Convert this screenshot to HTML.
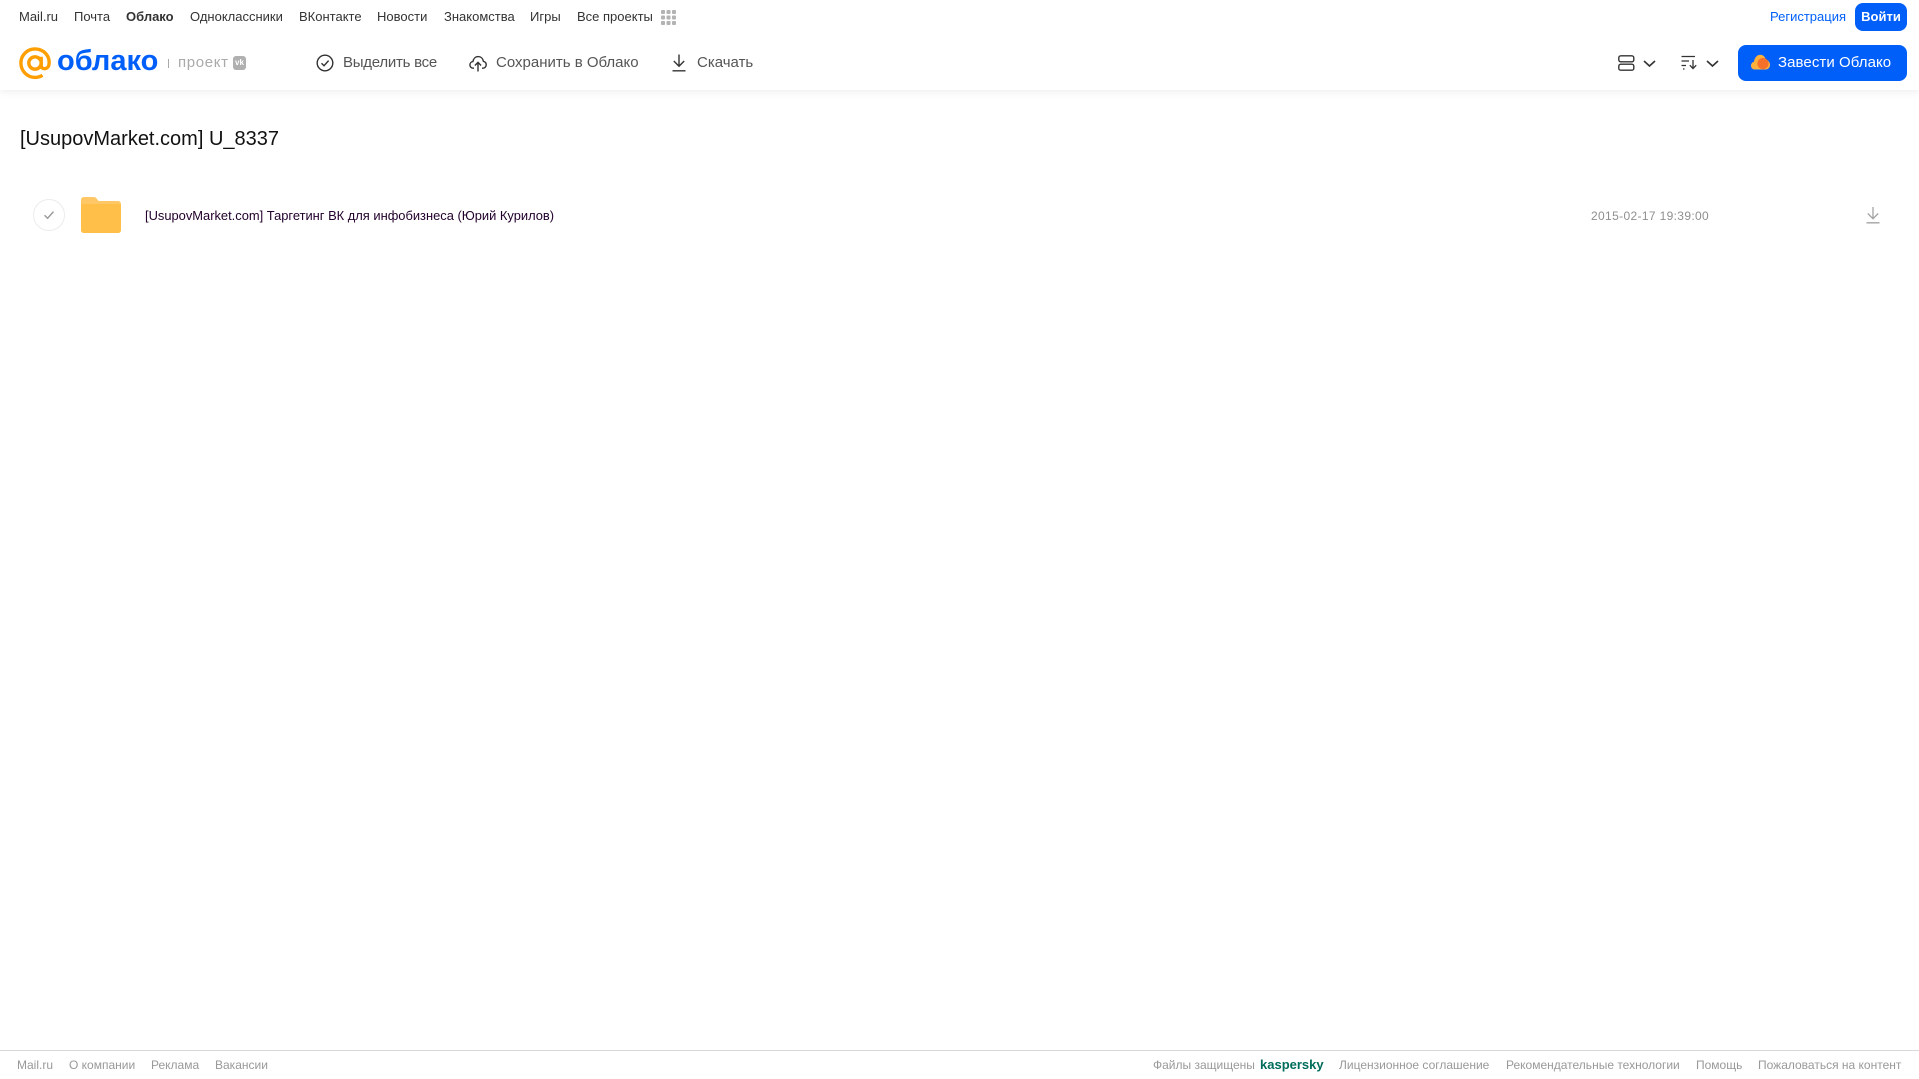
<!DOCTYPE html>
<html lang="ru"><head><meta charset="utf-8"><title>Облако</title>
<style>
html,body{margin:0;padding:0;background:#fff;width:1919px;height:1079px;overflow:hidden}
body{font-family:"Liberation Sans",Arial,sans-serif;position:relative}
.t{position:absolute;white-space:nowrap;line-height:20px}
.n{top:7px;font-size:13px;color:#333}
.b{top:53px;font-size:15px;color:#555}
.f{top:1055px;font-size:12px;color:#999}
svg{position:absolute;overflow:visible}
</style></head><body>
<div style="position:absolute;left:0;top:0;width:1919px;height:90px;background:#fff;box-shadow:0 2px 8px rgba(0,0,0,.07)"></div>

<span class="t n" style="left:19px">Mail.ru</span>
<span class="t n" style="left:74px">Почта</span>
<span class="t n" style="left:126px;font-weight:bold">Облако</span>
<span class="t n" style="left:190px">Одноклассники</span>
<span class="t n" style="left:299px">ВКонтакте</span>
<span class="t n" style="left:377px">Новости</span>
<span class="t n" style="left:444px">Знакомства</span>
<span class="t n" style="left:530px">Игры</span>
<span class="t n" style="left:577px">Все проекты</span>
<svg style="left:661px;top:10px" width="15" height="15" fill="#b3b3b3">
<rect width="4" height="4" rx="1"/><rect x="5.500" width="4" height="4" rx="1"/><rect x="11" width="4" height="4" rx="1"/>
<rect y="5.500" width="4" height="4" rx="1"/><rect x="5.500" y="5.500" width="4" height="4" rx="1"/><rect x="11" y="5.500" width="4" height="4" rx="1"/>
<rect y="11" width="4" height="4" rx="1"/><rect x="5.500" y="11" width="4" height="4" rx="1"/><rect x="11" y="11" width="4" height="4" rx="1"/>
</svg>

<span class="t n" style="left:1770px;color:#005ff9">Регистрация</span>
<div style="position:absolute;left:1855px;top:3px;width:52px;height:28px;border-radius:8px;background:#005ff9;color:#fff;font-size:13px;font-weight:bold;line-height:28px;text-align:center">Войти</div>

<svg style="left:19px;top:47px" width="33" height="33" viewBox="0 0 33 33" fill="none" stroke="#ff9e00" stroke-width="3.400">
<circle cx="16" cy="16" r="6.200"/>
<path d="M22.200 9.800V18.500C22.200 22.800 28.800 22.800 29.900 18C31.500 9.500 25 1.900 16 1.900C8.200 1.900 1.900 8.200 1.900 16C1.900 24 8.200 30.400 16 30.400C18.800 30.400 21.200 29.700 23.500 28.300"/>
</svg>
<span class="t" style="left:57px;top:45px;font-size:29px;line-height:32px;font-weight:bold;color:#005ff9">облако</span>
<div style="position:absolute;left:168px;top:59px;width:1px;height:9px;background:#aaa"></div>
<span class="t" style="left:178px;top:53px;font-size:15px;color:#aaa;letter-spacing:.65px">проект</span>
<div style="position:absolute;left:233px;top:56px;width:13px;height:14px;border-radius:3px;background:#b0b0b0;color:#fff;font-size:8px;font-weight:bold;line-height:14px;text-align:center">vk</div>

<svg style="left:316px;top:54px" width="18" height="18" viewBox="0 0 18 18" fill="none" stroke="#333" stroke-width="1.400">
<circle cx="9" cy="9" r="7.800"/><path d="M5.500 9.200L8 11.700L12.600 6.600"/>
</svg>
<span class="t b" style="left:343px;letter-spacing:-.25px">Выделить все</span>

<svg style="left:469px;top:54px" width="18" height="18" viewBox="0 0 18 18" fill="none" stroke="#333" stroke-width="1.400">
<path d="M5 14.200H4.300C2.300 14.200 .9 12.700 .9 10.900C.9 9.200 2.200 7.800 3.900 7.600C4.400 4.600 6.500 2.600 9.200 2.600C11.900 2.600 13.900 4.600 14.400 7.300C16 7.700 17.200 9 17.200 10.800C17.200 12.700 15.700 14.200 13.700 14.200H13"/>
<path d="M9 17.500V8.500M5.900 11.500L9 8.400L12.100 11.500"/>
</svg>
<span class="t b" style="left:496px">Сохранить в Облако</span>

<svg style="left:672px;top:54px" width="14" height="18" viewBox="0 0 14 18" fill="none" stroke="#333" stroke-width="1.400">
<path d="M7 .5V12M1.800 7L7 12.200L12.200 7M.5 16.800H13.500"/>
</svg>
<span class="t b" style="left:697px">Скачать</span>

<svg style="left:1618px;top:55px" width="17" height="16" viewBox="0 0 17 16" fill="none" stroke="#333" stroke-width="1.400">
<rect x=".8" y=".8" width="15" height="6" rx="2"/><rect x=".8" y="9.200" width="15" height="6" rx="2"/>
</svg>
<svg style="left:1643px;top:60px" width="13" height="8" viewBox="0 0 13 8" fill="none" stroke="#333" stroke-width="1.600">
<path d="M1 1L6.500 6L12 1"/>
</svg>
<svg style="left:1681px;top:55px" width="17" height="15" viewBox="0 0 17 15" fill="none" stroke="#333" stroke-width="1.300">
<path d="M.5 1.500H14M.5 6H8M.5 10.500H5M2 14H3.500M12 5V13.500M8.800 10.200L12 13.600L15.200 10.200"/>
</svg>
<svg style="left:1706px;top:60px" width="13" height="8" viewBox="0 0 13 8" fill="none" stroke="#333" stroke-width="1.600">
<path d="M1 1L6.500 6L12 1"/>
</svg>

<div style="position:absolute;left:1738px;top:45px;width:169px;height:36px;border-radius:8px;background:#005ff9"></div>
<svg style="left:1751px;top:54px" width="19" height="17" viewBox="0 0 19 17">
<path d="M4 15.500C1.600 15.500 0 13.800 0 11.600C0 9.700 1.300 8.200 3 7.800C3.600 3.400 6.300 .8 9.200 .8C12 .8 14 2.800 14.700 5.600C17 6.200 19 8 19 10.800C19 13.600 17 15.500 14.500 15.500Z" fill="#ffb13d"/>
<circle cx="12" cy="9.600" r="5.600" fill="#f5702a"/>
</svg>
<span class="t" style="left:1778px;top:53px;font-size:15px;color:#fff;letter-spacing:.07px">Завести Облако</span>

<span class="t" style="left:20px;top:126px;font-size:20px;line-height:26px;color:#111">[UsupovMarket.com] U_8337</span>

<div style="position:absolute;left:33px;top:199px;width:30px;height:30px;border:1px solid #ececec;border-radius:50%"></div>
<svg style="left:43px;top:210px" width="12" height="10" viewBox="0 0 12 10" fill="none" stroke="#999" stroke-width="1.400">
<path d="M1.500 5.200L4.600 8.200L10.500 1.600"/>
</svg>
<svg style="left:81px;top:197px" width="40" height="36" viewBox="0 0 40 36">
<path d="M0 3C0 1.300 1.300 0 3 0H12.500C14 0 15 .7 15.800 1.800L17.500 4H37C38.700 4 40 5.300 40 7V33C40 34.700 38.700 36 37 36H3C1.300 36 0 34.700 0 33Z" fill="#ffc766"/>
<path d="M0 9C0 7.800 1 7 2 7H38C39 7 40 7.800 40 9V33C40 34.700 38.700 36 37 36H3C1.300 36 0 34.700 0 33Z" fill="#ffbf48"/>
</svg>
<span class="t" style="left:145px;top:206px;font-size:12.900px;color:#21002b">[UsupovMarket.com] Таргетинг ВК для инфобизнеса (Юрий Курилов)</span>
<span class="t" style="left:1591px;top:206px;font-size:12px;color:#8f8f8f;letter-spacing:.35px">2015-02-17 19:39:00</span>
<svg style="left:1866px;top:207px" width="14" height="17" viewBox="0 0 14 17" fill="none" stroke="#a3a3a3" stroke-width="1.300">
<path d="M7 0V11.500M1.800 6.500L7 11.700L12.200 6.500M.5 15.800H13.500"/>
</svg>

<div style="position:absolute;left:0;top:1050px;width:1919px;height:1px;background:#d9d9d9"></div>
<span class="t f" style="left:17px">Mail.ru</span>
<span class="t f" style="left:69px">О компании</span>
<span class="t f" style="left:151px">Реклама</span>
<span class="t f" style="left:215px">Вакансии</span>
<span class="t f" style="left:1153px">Файлы защищены</span>
<span class="t f" style="left:1260px;font-size:13px;font-weight:bold;color:#006d5c">kaspersky</span>
<span class="t f" style="left:1339px">Лицензионное соглашение</span>
<span class="t f" style="left:1506px">Рекомендательные технологии</span>
<span class="t f" style="left:1696px">Помощь</span>
<span class="t f" style="left:1758px">Пожаловаться на контент</span>
</body></html>
